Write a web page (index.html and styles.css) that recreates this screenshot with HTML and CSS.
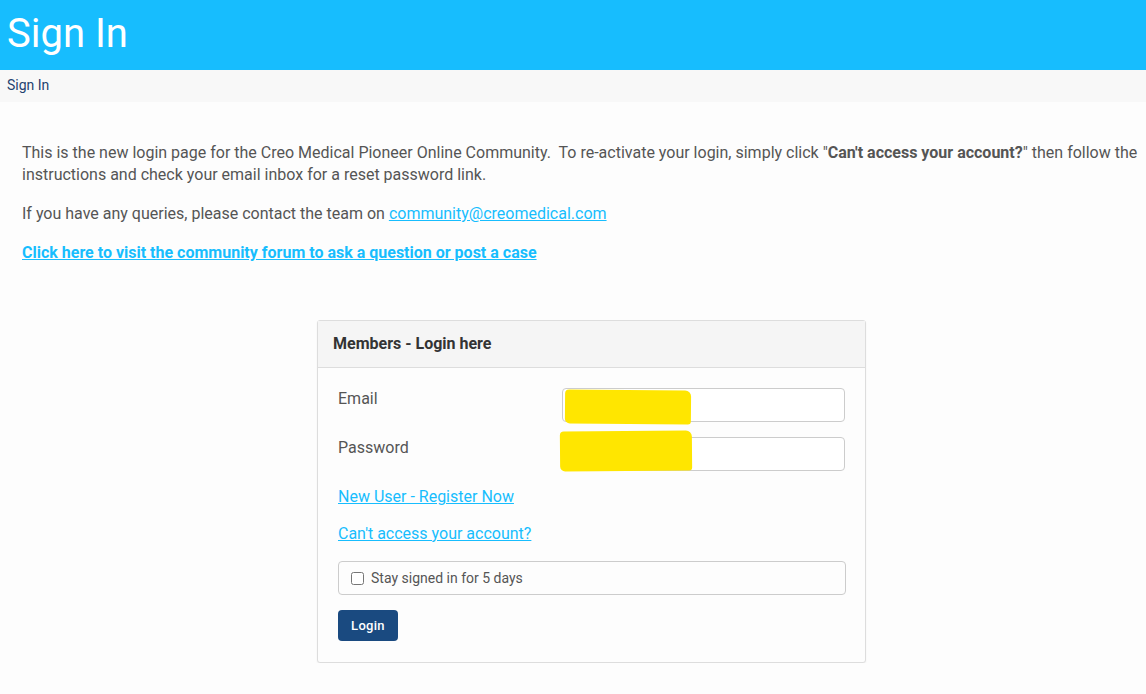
FILE: index.html
```html
<!DOCTYPE html>
<html>
<head>
<meta charset="utf-8">
<link rel="stylesheet" href="styles.css">
</head>
<body>
<header class="banner"><h1>Sign In</h1></header>
<nav class="crumbs">Sign In</nav>
<main class="content">
  <p>This is the new login page for the Creo Medical Pioneer Online Community.&nbsp; To re-activate your login, simply click "<b>Can't access your account?</b>" then follow the instructions and check your email inbox for a reset password link.</p>
  <p>If you have any queries, please contact the team on <a href="#">community@creomedical.com</a></p>
  <p><a href="#" class="strong">Click here to visit the community forum to ask a question or post a case</a></p>

  <section class="panel">
    <div class="panel-head">Members - Login here</div>
    <div class="panel-body">
      <div class="row">
        <label>Email</label>
        <div class="field"><input type="text"><span class="mark mark1"></span></div>
      </div>
      <div class="row">
        <label>Password</label>
        <div class="field"><input type="password"><span class="mark mark2"></span></div>
      </div>
      <a href="#" class="link">New User - Register Now</a>
      <a href="#" class="link">Can't access your account?</a>
      <div class="stay"><input type="checkbox"><span>Stay signed in for 5 days</span></div>
      <button class="btn">Login</button>
    </div>
  </section>
</main>
</body>
</html>
```
FILE: styles.css
```css
html, body { margin: 0; padding: 0; }
body {
  background: #fdfdfd;
  font-family: Roboto, "Liberation Sans", sans-serif;
  color: #555;
}
.banner {
  background: #17bdfe;
  height: 70px;
  display: flex;
  align-items: center;
  padding-left: 7px;
}
.banner h1 {
  margin: 0;
  color: #fff;
  font-weight: 400;
  font-size: 40px;
  line-height: 1;
  position: relative;
  top: -1px;
}
.crumbs {
  background: #f8f8f8;
  height: 32px;
  line-height: 31px;
  padding-left: 7px;
  font-size: 14px;
  color: #1f4270;
}
.content {
  padding: 40px 0 0 22px;
}
.content p {
  margin: 0 0 17px;
  font-size: 16px;
  line-height: 22px;
}
a { color: #17bdfe; }
a.strong { font-weight: 700; }
.panel {
  width: 547px;
  margin: 56px 0 0 295px;
  border: 1px solid #ddd;
  border-radius: 3px;
  background: #fdfdfd;
  box-shadow: 0 1px 2px rgba(0,0,0,0.06);
}
.panel-head {
  background: #f5f5f5;
  border-bottom: 1px solid #ddd;
  height: 46px;
  line-height: 46px;
  padding-left: 15px;
  font-weight: 700;
  font-size: 16px;
  color: #333;
}
.panel-body {
  padding: 20px 20px 21px 20px;
  display: flex;
  flex-direction: column;
  align-items: flex-start;
}
.row {
  display: grid;
  grid-template-columns: 224px 283px;
  width: 508px;
  margin-bottom: 15px;
}
.row label {
  font-size: 16px;
  line-height: 22px;
  color: #555;
}
.field { position: relative; height: 34px; }
.field input {
  box-sizing: border-box;
  width: 283px;
  height: 34px;
  border: 1px solid #ccc;
  border-radius: 4px;
  background: #fff;
  margin: 0;
}
.mark {
  position: absolute;
  background: #ffe600;
  border-radius: 4px 6px 3px 5px;
}
.mark1 { left: 3px; top: 2px; width: 126px; height: 34px; transform: rotate(0.5deg); }
.mark2 { left: -2px; top: -6px; width: 132px; height: 40px; transform: rotate(-0.5deg); }
.link {
  font-size: 16px;
  line-height: 22px;
  margin-bottom: 15px;
}
.stay {
  box-sizing: border-box;
  width: 508px;
  height: 34px;
  border: 1px solid #ccc;
  border-radius: 4px;
  display: flex;
  align-items: center;
  padding-left: 12px;
  font-size: 14px;
  color: #555;
  margin-top: 1px;
}
.stay input { margin: 0 7px 0 0; width: 13px; height: 13px; }
.btn {
  margin-top: 15px;
  background: #1a4a80;
  color: #fff;
  border: 0;
  border-radius: 4px;
  width: 60px;
  height: 31px;
  font-family: Roboto, "Liberation Sans", sans-serif;
  font-size: 13px;
  font-weight: 500;
  letter-spacing: 0.3px;
  padding: 0;
}
```
